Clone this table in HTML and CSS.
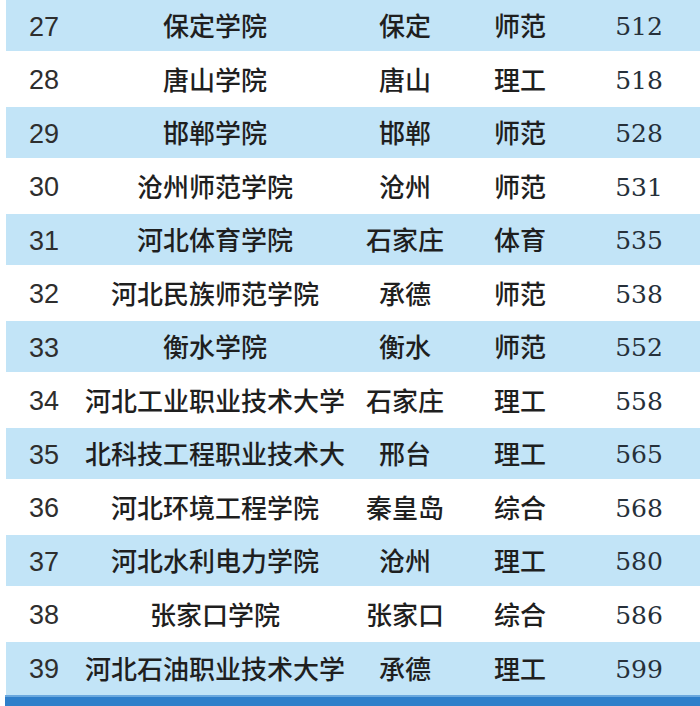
FILE: index.html
```html
<!DOCTYPE html>
<html lang="zh-CN">
<head>
<meta charset="utf-8">
<title>河北院校分数线</title>
<link rel="stylesheet" href="styles.css">
</head>
<body>
<div class="table">
  <div class="row blue"><span class="rank">27</span><span class="name">保定学院</span><span class="city">保定</span><span class="type">师范</span><span class="score">512</span></div>
  <div class="row"><span class="rank">28</span><span class="name">唐山学院</span><span class="city">唐山</span><span class="type">理工</span><span class="score">518</span></div>
  <div class="row blue"><span class="rank">29</span><span class="name">邯郸学院</span><span class="city">邯郸</span><span class="type">师范</span><span class="score">528</span></div>
  <div class="row"><span class="rank">30</span><span class="name">沧州师范学院</span><span class="city">沧州</span><span class="type">师范</span><span class="score">531</span></div>
  <div class="row blue"><span class="rank">31</span><span class="name">河北体育学院</span><span class="city">石家庄</span><span class="type">体育</span><span class="score">535</span></div>
  <div class="row"><span class="rank">32</span><span class="name">河北民族师范学院</span><span class="city">承德</span><span class="type">师范</span><span class="score">538</span></div>
  <div class="row blue"><span class="rank">33</span><span class="name">衡水学院</span><span class="city">衡水</span><span class="type">师范</span><span class="score">552</span></div>
  <div class="row"><span class="rank">34</span><span class="name">河北工业职业技术大学</span><span class="city">石家庄</span><span class="type">理工</span><span class="score">558</span></div>
  <div class="row blue"><span class="rank">35</span><span class="name">北科技工程职业技术大</span><span class="city">邢台</span><span class="type">理工</span><span class="score">565</span></div>
  <div class="row"><span class="rank">36</span><span class="name">河北环境工程学院</span><span class="city">秦皇岛</span><span class="type">综合</span><span class="score">568</span></div>
  <div class="row blue"><span class="rank">37</span><span class="name">河北水利电力学院</span><span class="city">沧州</span><span class="type">理工</span><span class="score">580</span></div>
  <div class="row"><span class="rank">38</span><span class="name">张家口学院</span><span class="city">张家口</span><span class="type">综合</span><span class="score">586</span></div>
  <div class="row blue last"><span class="rank">39</span><span class="name">河北石油职业技术大学</span><span class="city">承德</span><span class="type">理工</span><span class="score">599</span></div>
  <div class="footer-bar"></div>
</div>
</body>
</html>
```
FILE: styles.css
```css
html, body {
  margin: 0;
  padding: 0;
  background: #ffffff;
}
body {
  width: 700px;
  height: 706px;
  overflow: hidden;
  font-family: "Noto Sans CJK SC", "Liberation Sans", sans-serif;
  color: #2b2b2b;
}
.table {
  display: flex;
  flex-direction: column;
  margin-top: -2px;
  padding-left: 6px;
}
.row {
  display: grid;
  grid-template-columns: 76px 266px 114px 116px 122px;
  align-items: center;
  height: 53.5px;
  box-sizing: border-box;
  border-top: 2px solid #ffffff;
  border-bottom: 1.5px solid #ffffff;
}
.row.blue {
  background: #c2e4f7;
}
.row.last {
  border-bottom: 0;
  height: 55px;
  padding-bottom: 2px;
}
.row span {
  text-align: center;
  white-space: nowrap;
  line-height: 1;
}
.rank {
  font-family: "Liberation Sans", "DejaVu Sans", sans-serif;
  font-size: 27px;
  color: #2e2e2e;
  padding-top: 4px;
}
.score {
  font-family: "DejaVu Serif", "Liberation Serif", serif;
  font-size: 25px;
  color: #26303a;
  padding-top: 3px;
}
.name, .city, .type {
  font-size: 26px;
  font-weight: 500;
  color: #1f1f1f;
}
.footer-bar {
  height: 10px;
  margin-left: -1px;
  background: #2f7fca;
  border-top: 2px solid #6aa8de;
}
```
